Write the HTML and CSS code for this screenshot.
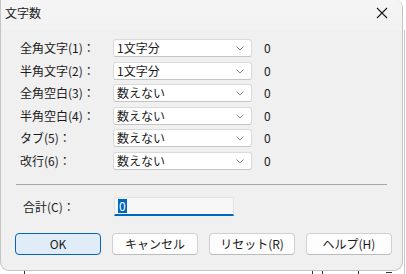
FILE: index.html
```html
<!DOCTYPE html>
<html lang="ja">
<head>
<meta charset="utf-8">
<title>文字数</title>
<link rel="stylesheet" href="styles.css">
</head>
<body>
<div class="backdrop">
  <span class="bl bl1"></span>
  <span class="bl bl2"></span>
  <span class="bl bl3"></span>
  <span class="bl bl4"></span>
  <span class="bl bl5"></span>
  <span class="bl vline"></span>
</div>
<div class="dialog">
  <div class="titlebar">
    <span class="title">文字数</span>
    <svg class="close" width="12" height="12" viewBox="0 0 12 12"><path d="M1 1 L11 11 M11 1 L1 11" stroke="#1a1a1a" stroke-width="1.1" fill="none"/></svg>
  </div>
  <div class="content">
    <div class="rows">
      <span class="label">全角文字(1)：</span><div class="combo"><span>1文字分</span><svg class="chev" width="8" height="5" viewBox="0 0 8 5"><path d="M0.5 0.5 L4 4 L7.5 0.5" stroke="#8a8a8a" fill="none"/></svg></div><span class="val">0</span>
      <span class="label">半角文字(2)：</span><div class="combo"><span>1文字分</span><svg class="chev" width="8" height="5" viewBox="0 0 8 5"><path d="M0.5 0.5 L4 4 L7.5 0.5" stroke="#8a8a8a" fill="none"/></svg></div><span class="val">0</span>
      <span class="label">全角空白(3)：</span><div class="combo"><span>数えない</span><svg class="chev" width="8" height="5" viewBox="0 0 8 5"><path d="M0.5 0.5 L4 4 L7.5 0.5" stroke="#8a8a8a" fill="none"/></svg></div><span class="val">0</span>
      <span class="label">半角空白(4)：</span><div class="combo"><span>数えない</span><svg class="chev" width="8" height="5" viewBox="0 0 8 5"><path d="M0.5 0.5 L4 4 L7.5 0.5" stroke="#8a8a8a" fill="none"/></svg></div><span class="val">0</span>
      <span class="label">タブ(5)：</span><div class="combo"><span>数えない</span><svg class="chev" width="8" height="5" viewBox="0 0 8 5"><path d="M0.5 0.5 L4 4 L7.5 0.5" stroke="#8a8a8a" fill="none"/></svg></div><span class="val">0</span>
      <span class="label">改行(6)：</span><div class="combo"><span>数えない</span><svg class="chev" width="8" height="5" viewBox="0 0 8 5"><path d="M0.5 0.5 L4 4 L7.5 0.5" stroke="#8a8a8a" fill="none"/></svg></div><span class="val">0</span>
    </div>
    <div class="sep"></div>
    <div class="total">
      <span class="tlabel">合計(C)：</span>
      <div class="tinput"><span class="sel">0</span></div>
    </div>
    <div class="buttons">
      <button class="btn primary">OK</button>
      <button class="btn">キャンセル</button>
      <button class="btn">リセット(R)</button>
      <button class="btn">ヘルプ(H)</button>
    </div>
  </div>
</div>
</body>
</html>
```
FILE: styles.css
```css
* { box-sizing: border-box; }
html, body {
  margin: 0;
  padding: 0;
}
body {
  width: 406px;
  height: 274px;
  overflow: hidden;
  background: #ffffff;
  position: relative;
  font-family: "Noto Sans CJK JP", "Noto Sans", sans-serif;
  font-size: 12px;
  color: #1a1a1a;
}
.backdrop { position: absolute; inset: 0; }
.bl {
  position: absolute;
  background: #333;
  width: 1px;
  top: 268px;
  height: 6px;
}
.bl1 { left: 24px; }
.bl2 { left: 312px; }
.bl3 { left: 322px; }
.bl4 { left: 358px; }
.bl5 { left: 386px; width: 6px; height: 1px; top: 272px; }
.vline { left: 404px; top: 30px; height: 244px; background: #c8c8c8; }

.dialog {
  position: absolute;
  left: 0;
  top: 0;
  width: 403px;
  height: 271px;
  background: #f0f0f0;
  border: 1px solid #c4c4c4;
  border-top: none;
  border-radius: 0 8px 9px 9px;
  display: flex;
  flex-direction: column;
  overflow: hidden;
}
.titlebar {
  height: 30px;
  flex: none;
  display: flex;
  align-items: center;
  justify-content: space-between;
  padding: 0 14px 0 4px;
  background: linear-gradient(#f5f5f5, #f2f2f2);
}
.title { font-size: 12px; line-height: 1; margin-top: -4px; }
.close { margin-top: -4px; }

.content {
  flex: 1;
  display: flex;
  flex-direction: column;
  padding: 9px 0 0 19px;
}
.rows {
  display: grid;
  grid-template-columns: 93px 139px auto;
  grid-auto-rows: 18px;
  row-gap: 4.5px;
  align-items: center;
}
.label { line-height: 18px; white-space: nowrap; }
.combo {
  height: 18px;
  background: #ffffff;
  border: 1px solid #dadada;
  border-bottom-color: #c4c4c4;
  border-radius: 3px;
  display: flex;
  align-items: center;
  justify-content: space-between;
  padding: 0 7px 0 3px;
  line-height: 16px;
}
.chev { margin-top: 1px; }
.val { padding-left: 12px; line-height: 18px; }

.sep {
  height: 1px;
  background: #a8a8a8;
  width: 371px;
  margin: 14px 0 0 -4px;
}
.total {
  display: flex;
  align-items: center;
  margin-top: 12px;
}
.tlabel { width: 94px; padding-left: 3px; }
.tinput {
  width: 120px;
  height: 19px;
  background: #f7f7f7;
  border: 1px solid #e2e2e2;
  border-bottom: 2px solid #0067c0;
  border-radius: 2px 2px 0 0;
  display: flex;
  align-items: center;
  padding-left: 3px;
}
.sel {
  background: #0067c0;
  color: #ffffff;
  line-height: 14px;
  padding: 0 1px;
}
.buttons {
  display: flex;
  gap: 11px;
  margin-top: 17px;
  margin-left: -5px;
}
.btn {
  width: 86px;
  height: 22px;
  font-family: inherit;
  font-size: 12px;
  color: #1a1a1a;
  background: #fdfdfd;
  border: 1px solid #d0d0d0;
  border-bottom-color: #bcbcbc;
  border-radius: 4px;
  padding: 0;
  line-height: 18px;
}
.btn.primary {
  background: #e0ecf8;
  border: 1px solid #0067c0;
}
```
